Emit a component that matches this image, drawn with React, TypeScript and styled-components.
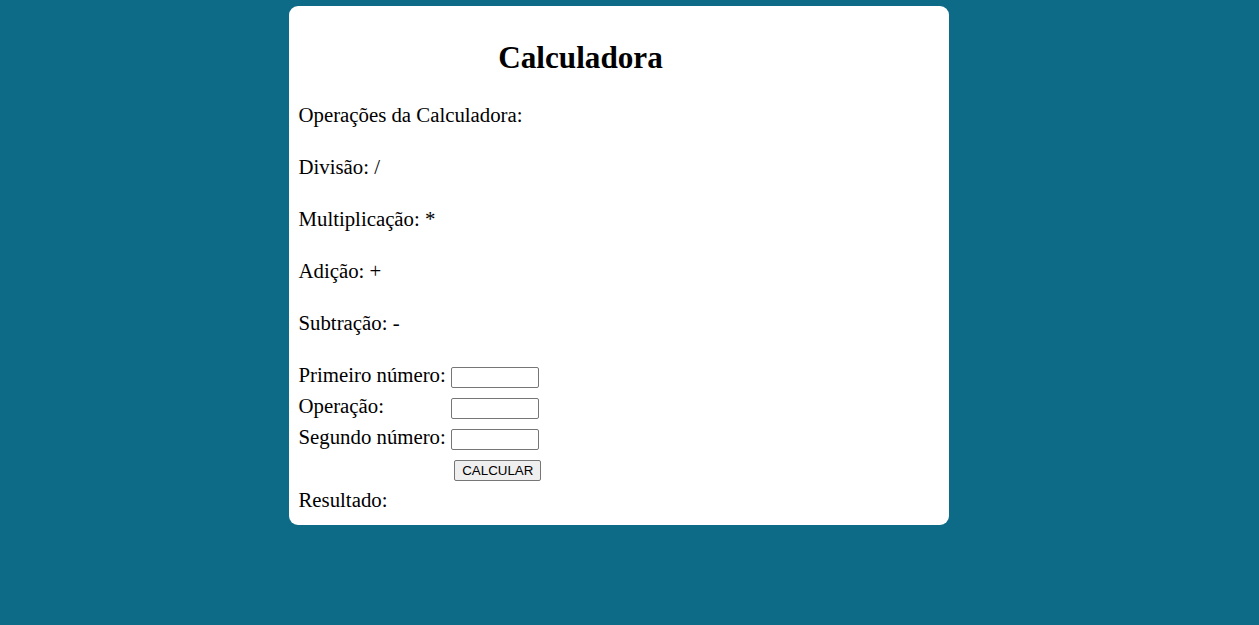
import styled, { createGlobalStyle } from 'styled-components';

const GlobalStyle = createGlobalStyle`
  html, body {
    margin: 0;
    padding: 0;
    background: #0e6b88;
    font-family: "Liberation Serif", "Times New Roman", serif;
  }
`;

function App() {
  return (
    <Page>
      <GlobalStyle />
      <Card>
        <Title>Calculadora</Title>
        <Line>Operações da Calculadora:</Line>
        <Line>Divisão: /</Line>
        <Line>Multiplicação: *</Line>
        <Line>Adição: +</Line>
        <Line>Subtração: -</Line>
        <Form>
          <Label>Primeiro número:</Label>
          <Input type="text" />
          <Label>Operação:</Label>
          <Input type="text" />
          <Label>Segundo número:</Label>
          <Input type="text" />
          <span />
          <Button type="button">CALCULAR</Button>
        </Form>
        <Result>Resultado:</Result>
      </Card>
    </Page>
  );
}

export default App;

export const Page = styled.div`
  display: flex;
  justify-content: center;
  padding: 6px 21px 0 0;
  min-height: 100vh;
  box-sizing: border-box;
`;

export const Card = styled.div`
  width: 660px;
  box-sizing: border-box;
  background: #ffffff;
  border-radius: 9px;
  padding: 34px 10px 13px 9.5px;
  height: 519px;
  color: #000;
  font-size: 20.8px;
`;

export const Title = styled.h1`
  margin: 0 76.5px 27px 0;
  font-size: 31.2px;
  line-height: 36px;
  font-weight: 700;
  text-align: center;
`;

export const Line = styled.p`
  margin: 0 0 28px;
  line-height: 24px;
`;

export const Form = styled.div`
  display: grid;
  grid-template-columns: max-content max-content;
  grid-auto-rows: 31px;
  column-gap: 5.5px;
  align-items: start;
`;

export const Label = styled.span`
  line-height: 24px;
`;

export const Input = styled.input`
  margin: 4px 0 0;
  width: 88px;
  height: 21px;
  box-sizing: border-box;
  border: 1px solid #767676;
  border-radius: 2px;
  padding: 1px 2px;
  font-size: 13.33px;
  background: #fff;
`;

export const Button = styled.button`
  margin: 4px 0 0 3px;
  width: 87px;
  height: 21px;
  box-sizing: border-box;
  border: 1px solid #767676;
  border-radius: 2px;
  background: #efefef;
  padding: 0;
  font-family: "Liberation Sans", Arial, sans-serif;
  font-size: 13.33px;
  color: #000;
`;

export const Result = styled.p`
  margin: 1px 0 0;
  line-height: 24px;
`;
